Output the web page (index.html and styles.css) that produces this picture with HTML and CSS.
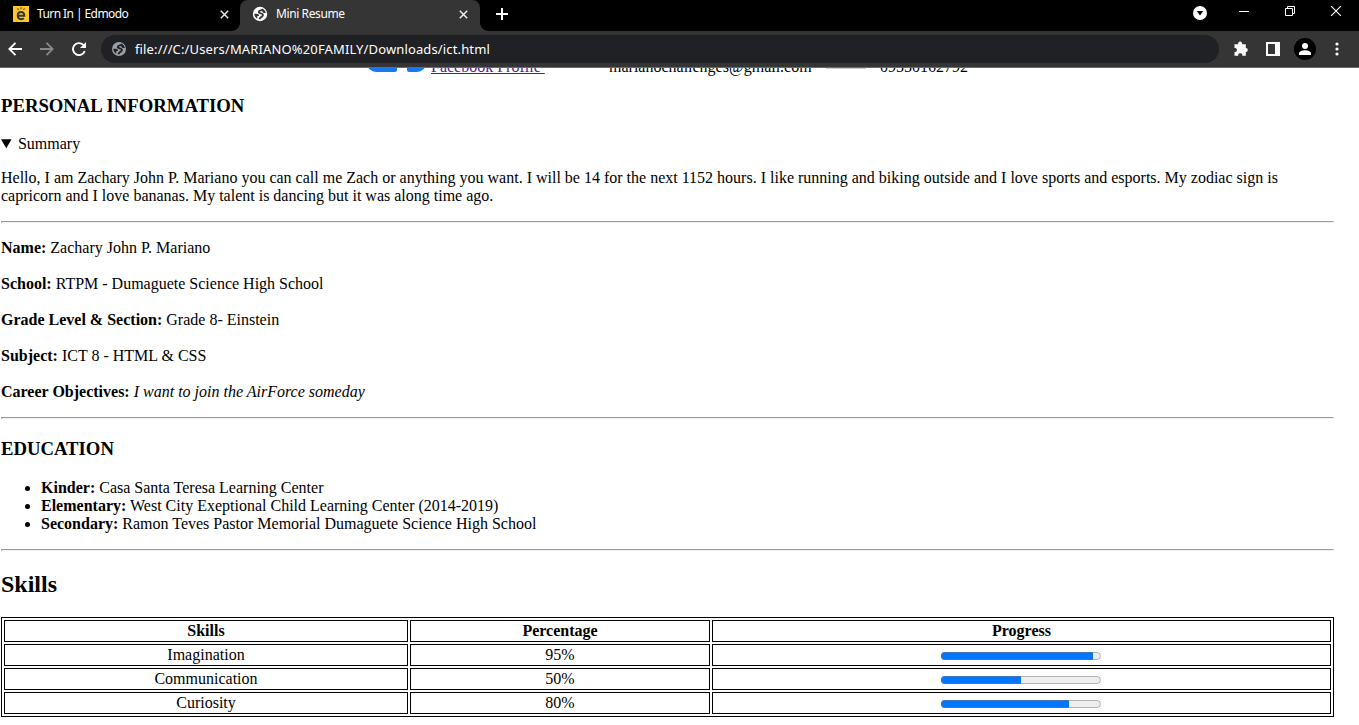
FILE: index.html
```html
<!DOCTYPE html>
<html lang="en">
<head>
<meta charset="utf-8">
<title>Mini Resume</title>
<link rel="stylesheet" href="styles.css">
</head>
<body>
<header class="browser">
  <div class="tabs">
    <div class="tab">
      <svg class="favicon" width="16" height="16" viewBox="0 0 16 16"><rect width="16" height="16" fill="#fdc62d"/><path d="M4.800 9.700h6.500C11.200 7 9.800 6 8 6 6 6 4.700 7.400 4.700 9.600 4.700 12 6 13.200 8.200 13.200c1.100 0 2-.3 2.700-.9" fill="none" stroke="#33332f" stroke-width="1.900"/><path d="M4.500 2.300 5.600 4M8 1.300v2M11.500 2.300 10.400 4" stroke="#6b5a22" stroke-width="1.300"/></svg>
      <span class="tab-title first-title">Turn In | Edmodo</span>
      <svg class="close" width="9" height="9" viewBox="0 0 9 9"><path d="M.8.8l7.400 7.400M8.200.8.8 8.200" stroke="#e6e6e6" stroke-width="1.500"/></svg>
    </div>
    <div class="tab active">
      <svg class="favicon" width="16" height="16" viewBox="0 0 16 16"><circle cx="8" cy="8" r="7.200" fill="#fff"/><path d="M10.800 3.300c-.8 1.600-3.600.6-4 2.600-.4 1.900 4.200.9 4.200 3 0 2-2.600 1.200-3.600 4.300" fill="none" stroke="#353535" stroke-width="1.900"/><path d="M2.300 7.800h2.400c1.600 0 2.300.8 2.300 2.200H5.300v2.700C3.500 11.700 2.400 10 2.300 7.800zM10 2.500c2.100.7 3.500 2.300 3.800 4.500-1.700.2-3.200-.2-3.500-1.500z" fill="#353535"/></svg>
      <span class="tab-title">Mini Resume</span>
      <svg class="close" width="9" height="9" viewBox="0 0 9 9"><path d="M.8.8l7.400 7.400M8.200.8.8 8.200" stroke="#eee" stroke-width="1.500"/></svg>
    </div>
    <svg class="plus" width="12" height="12" viewBox="0 0 12 12"><path d="M6 0v12M0 6h12" stroke="#fff" stroke-width="2"/></svg>
    <div class="window-buttons">
      <svg width="14" height="14" viewBox="0 0 14 14"><circle cx="7" cy="7" r="7" fill="#fff"/><path d="M3.800 5h6.400L7 9.400z" fill="#000"/></svg>
      <svg class="minimize" width="10" height="10" viewBox="0 0 10 10"><path d="M0 5.500h10" stroke="#fff"/></svg>
      <svg class="restore" width="10" height="10" viewBox="0 0 10 10"><path d="M.5 2.500h7v7h-7zM2.500 2.500v-2h7v7h-2" fill="none" stroke="#fff"/></svg>
      <svg class="quit" width="10" height="10" viewBox="0 0 10 10"><path d="M0 0l10 10M10 0 0 10" stroke="#fff" stroke-width="1.100"/></svg>
    </div>
  </div>
  <div class="toolbar">
    <svg class="back" width="14" height="14" viewBox="0 0 14 14"><path d="M14 7H1.500M7.500.8 1.300 7l6.200 6.200" fill="none" stroke="#fff" stroke-width="1.900"/></svg>
    <svg class="forward" width="14" height="14" viewBox="0 0 14 14"><path d="M0 7h12.500M6.500.8 12.700 7l-6.200 6.200" fill="none" stroke="#888" stroke-width="1.900"/></svg>
    <svg class="reload" width="14" height="14" viewBox="0 0 14 14"><path d="M12.700 9A6 6 0 1 1 11.300 2.900L12.500 4.200" fill="none" stroke="#fff" stroke-width="1.900"/><path d="M14 0v6H8z" fill="#fff"/></svg>
    <div class="address">
      <svg width="14" height="14" viewBox="1 1 14 14"><circle cx="8" cy="8" r="7" fill="#9aa0a6"/><path d="M10.800 3.300c-.8 1.600-3.600.6-4 2.600-.4 1.900 4.200.9 4.200 3 0 2-2.600 1.200-3.600 4.300" fill="none" stroke="#202124" stroke-width="1.900"/><path d="M2.300 7.800h2.400c1.600 0 2.300.8 2.300 2.200H5.300v2.700C3.500 11.700 2.400 10 2.300 7.800zM10 2.500c2.100.7 3.500 2.300 3.800 4.500-1.700.2-3.200-.2-3.500-1.500z" fill="#202124"/></svg>
      <span class="url">file:///C:/Users/MARIANO%20FAMILY/Downloads/ict.html</span>
    </div>
    <svg class="puzzle" width="16" height="16" viewBox="0 0 16 16"><path d="M1.500 3.200h3.700a2 2 0 1 1 3.800 0h3.800V7a2 2 0 1 1 0 4v3.800H9.200a2 2 0 1 0-3.900 0H1.500V11a2 2 0 1 0 0-3.900z" fill="#fff"/></svg>
    <svg class="panel" width="14" height="14" viewBox="0 0 14 14"><path d="M0 0h14v14H0zM2 2v10h7V2z" fill="#fff" fill-rule="evenodd"/></svg>
    <svg class="profile" width="22" height="22" viewBox="0 0 22 22"><circle cx="11" cy="11" r="11" fill="#000"/><circle cx="11" cy="8" r="3" fill="#fff"/><path d="M5 17v-1.500C5 13.300 8.500 12.300 11 12.300s6 1 6 3.200V17z" fill="#fff"/></svg>
    <svg class="more" width="4" height="14" viewBox="0 0 4 14"><g fill="#fff"><circle cx="2" cy="2" r="1.600"/><circle cx="2" cy="7" r="1.600"/><circle cx="2" cy="12" r="1.600"/></g></svg>
  </div>
</header>
<main class="page">
  <div class="contact">
    <span class="badge badge-left"></span><span class="badge badge-right"></span>
    <a class="profile-link" href="#">Facebook Profile&nbsp;</a>
    <span class="email">marianochallenges@gmail.com</span>
    <span class="phone-shadow"></span>
    <span>09550162792</span>
  </div>
  <h3>PERSONAL INFORMATION</h3>
  <details open>
    <summary>Summary</summary>
    <p>Hello, I am Zachary John P. Mariano you can call me Zach or anything you want. I will be 14 for the next 1152 hours. I like running and biking outside and I love sports and esports. My zodiac sign is<br>capricorn and I love bananas. My talent is dancing but it was along time ago.</p>
  </details>
  <hr>
  <p class="fact"><b>Name:</b> Zachary John P. Mariano</p>
  <p class="fact"><b>School:</b> RTPM - Dumaguete Science High School</p>
  <p class="fact"><b>Grade Level &amp; Section:</b> Grade 8- Einstein</p>
  <p class="fact"><b>Subject:</b> ICT 8 - HTML &amp; CSS</p>
  <p class="fact last"><b>Career Objectives:</b> <i>I want to join the AirForce someday</i></p>
  <hr>
  <h3>EDUCATION</h3>
  <ul>
    <li><b>Kinder:</b> Casa Santa Teresa Learning Center</li>
    <li><b>Elementary:</b> West City Exeptional Child Learning Center (2014-2019)</li>
    <li><b>Secondary:</b> Ramon Teves Pastor Memorial Dumaguete Science High School</li>
  </ul>
  <hr>
  <h2>Skills</h2>
  <table class="skills">
    <colgroup><col class="col-skill"><col class="col-percent"><col></colgroup>
    <tr><th>Skills</th><th>Percentage</th><th>Progress</th></tr>
    <tr><td>Imagination</td><td>95%</td><td><progress value="95" max="100"></progress></td></tr>
    <tr><td>Communication</td><td>50%</td><td><progress value="50" max="100"></progress></td></tr>
    <tr><td>Curiosity</td><td>80%</td><td><progress value="80" max="100"></progress></td></tr>
  </table>
</main>
</body>
</html>
```
FILE: styles.css
```css
html, body { margin: 0; height: 100%; overflow: hidden; background: #fff; }
body { display: flex; flex-direction: column; color: #000; }
svg { display: block; flex: none; }

.browser { flex: none; height: 68px; box-sizing: border-box; background: #353535; border-bottom: 1px solid #6a6a6a; font-family: "Noto Sans", "Open Sans", sans-serif; color: #fff; }
.tabs { display: flex; height: 31px; background: #000; }
.tab { display: flex; align-items: center; box-sizing: border-box; width: 240px; height: 28px; padding: 0 11px 0 13px; position: relative; }
.tab.active { height: 31px; padding: 0 12px 3px; background: #353535; border-radius: 8px 8px 0 0; }
.tab.active::before, .tab.active::after { content: ""; position: absolute; bottom: 0; width: 8px; height: 8px; }
.tab.active::before { left: -8px; background: radial-gradient(circle at 0 0, #000 7.5px, #353535 8px); }
.tab.active::after { right: -8px; background: radial-gradient(circle at 100% 0, #000 7.5px, #353535 8px); }
.tab-title { flex: 1; margin-left: 8px; font-size: 12px; line-height: 16px; letter-spacing: -.4px; white-space: nowrap; }
.first-title { letter-spacing: -.58px; }
.plus { margin: 8px 0 0 16px; }
.window-buttons { display: flex; margin: 6px 18px 0 auto; }
.window-buttons .minimize { margin: 0 0 0 32px; }
.window-buttons .restore { margin-left: 36px; }
.window-buttons .quit { margin-left: 36px; }

.toolbar { display: flex; align-items: center; height: 36px; padding-left: 8px; }
.forward { margin-left: 18px; }
.reload { margin-left: 18px; }
.address { display: flex; align-items: center; box-sizing: border-box; width: 1118px; height: 28px; margin-left: 15px; padding-left: 11px; border-radius: 14px; background: #202124; }
.url { margin-left: 9px; font-size: 13px; line-height: 18px; letter-spacing: .14px; white-space: nowrap; }
.puzzle { margin-left: 14px; }
.panel { margin-left: 17px; }
.profile { margin-left: 14px; }
.more { margin-left: 19px; }

.page { flex: 1; min-height: 0; overflow: hidden; padding-left: 1px; width: 1333px; font: 16px/18px "Liberation Serif", "Times New Roman", serif; }
.contact { display: flex; height: 18px; margin-top: -10px; padding-left: 366px; white-space: nowrap; }
.badge { height: 14px; background: #1877f2; }
.badge-left { width: 30px; border-radius: 0 0 2px 9px; }
.badge-right { width: 19px; margin-left: 10px; border-radius: 0 0 9px 2px; }
.profile-link { margin-left: 5px; width: 114px; color: #551a8b; }
.email { margin-left: 64px; width: 203px; }
.phone-shadow { width: 40px; height: 11px; margin: 0 14px; background: #ccc; }
h3 { margin: 18.72px 0; font-size: 18.72px; line-height: 22px; }
h2 { margin: 19.92px 0 18.92px; font-size: 24px; line-height: 27px; }
p { margin: 16px 0; }
.fact { margin: 16px 0 18px; }
.fact + .fact { margin-top: 0; }
.fact.last { margin-bottom: 16px; }
hr { margin: 16px 0; height: 0; border: 1px solid #9a9a9a; border-bottom-color: #eee; border-right-color: #eee; }
ul { margin: 18.72px 0 16px; padding-left: 40px; }

.skills { width: 1333px; table-layout: fixed; border: 1px solid #000; border-spacing: 2px; text-align: center; }
.skills th, .skills td { height: 18px; padding: 1px; border: 1px solid #000; }
.col-skill { width: 404px; }
.col-percent { width: 300px; }
progress { display: block; width: 160px; height: 16px; margin: 2px auto 0; transform: translateX(-1px); }
```
